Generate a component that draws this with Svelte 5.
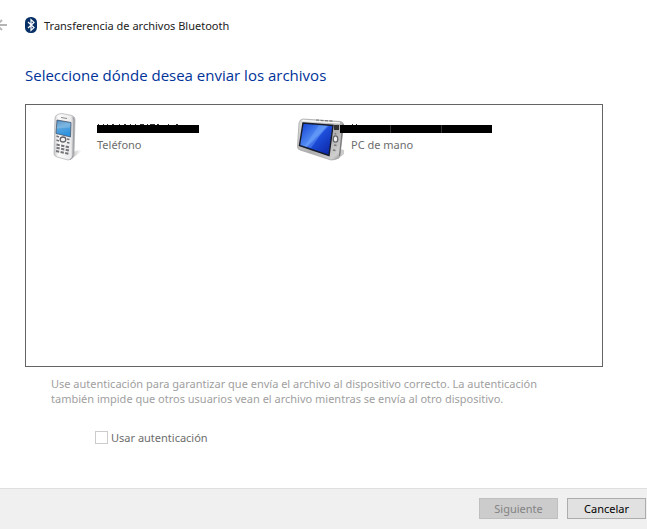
<script>
	let useAuth = $state(false);
	let selected = $state(-1);

	const devices = [
		{ kind: 'phone', type: 'Teléfono' },
		{ kind: 'handheld', type: 'PC de mano' }
	];
</script>

<div class="wizard">
	<header>
		<button class="back" aria-label="Atrás" disabled>
			<svg width="14" height="12" viewBox="0 0 14 12">
				<path d="M14 6H4M9 1L4 6l5 5" fill="none" stroke="#b4b4b4" stroke-width="1.8" />
			</svg>
		</button>
		<svg class="bt" width="12" height="16" viewBox="0 0 12 16">
			<rect width="12" height="16" rx="5.5" fill="#073067" />
			<path d="M3 5l6 5.6L6 13.3V2.7l3 2.7L3 11" fill="none" stroke="#fff" stroke-width="1.2" />
		</svg>
		<span>Transferencia de archivos Bluetooth</span>
	</header>

	<main>
		<h1>Seleccione dónde desea enviar los archivos</h1>

		<div class="devices">
			{#each devices as device, idx}
				<button class="device" class:active={idx === selected} onclick={() => (selected = idx)}>
					{#if device.kind === 'phone'}
						<svg class="pic" width="48" height="48" viewBox="0 0 48 48">
							<defs>
								<linearGradient id="body" x1="0" x2="1">
									<stop offset="0" stop-color="#c4c5c8" />
									<stop offset=".2" stop-color="#fafafa" />
									<stop offset=".8" stop-color="#ececee" />
									<stop offset="1" stop-color="#a5a6aa" />
								</linearGradient>
								<linearGradient id="lcd" x1="0" y1="0" x2=".3" y2="1">
									<stop offset="0" stop-color="#3a79b4" />
									<stop offset=".45" stop-color="#5fa6dc" />
									<stop offset="1" stop-color="#2a92e0" />
								</linearGradient>
								<linearGradient id="shade" x1="0" x2="1">
									<stop offset="0" stop-color="#777" stop-opacity=".6" />
									<stop offset="1" stop-color="#999" stop-opacity="0" />
								</linearGradient>
							</defs>
							<path d="M27 47l12-9-4-1-7 3z" fill="url(#shade)" />
							<path d="M12 5q0-3 4-4l3-.5 10 2q3 1 3 4l-1 35q0 3-3 4.500l-3 1-11-3q-3-1-3-3z" fill="url(#body)" stroke="#b6b7ba" stroke-width=".8" />
							<path d="M30 4.500l1 3-1 35q-.5 3-3 4" fill="none" stroke="#a1a2a6" stroke-width="1.2" />
							<path d="M18 4.500l6 1" stroke="#888" stroke-width="1" />
							<path d="M14 7l14 2.500-.5 14.500L13 20.500z" fill="url(#lcd)" stroke="#46566a" stroke-width=".8" />
							<path d="M14.500 8l13 2-.3 4.500-13.500 1z" fill="#fff" opacity=".18" />
							<ellipse cx="20" cy="26.5" rx="2.800" ry="2.500" fill="#f4f4f4" stroke="#65666b" stroke-width="1.3" />
							<path d="M13.500 23l2.500 1M13.500 27l2.500 1M24 26l2.500.5M24 29.500l2.500.5" stroke="#717277" stroke-width="1.500" />
							<path d="M13.500 31.500l13 2.800M13.500 34.800l13 2.800M13 38l13 2.800" stroke="#74757a" stroke-width="2" stroke-dasharray="3.300 1.400" />
						</svg>
					{:else}
						<svg class="pic" width="48" height="48" viewBox="0 0 48 48">
							<defs>
								<linearGradient id="metal" x1="0" y1="0" x2="1" y2="1">
									<stop offset="0" stop-color="#e0e0e0" />
									<stop offset=".55" stop-color="#aeaeae" />
									<stop offset=".85" stop-color="#cfcfcf" />
									<stop offset="1" stop-color="#777" />
								</linearGradient>
								<linearGradient id="screen" x1="0" y1="0" x2="1" y2="1">
									<stop offset="0" stop-color="#0d3ad2" />
									<stop offset=".45" stop-color="#5590f5" />
									<stop offset=".5" stop-color="#1d4fdc" />
									<stop offset="1" stop-color="#0a1f9c" />
								</linearGradient>
							</defs>
							<path d="M41 46l6-5v-4l-4-1z" fill="#aaa" opacity=".6" />
							<path d="M2 10q1-4 4-4l37 2.500q4 .5 3.500 4L43 42q-.5 4-5 4.500l-4 .5L3 37q-3-1-2.500-4z" fill="url(#metal)" stroke="#a0a0a0" stroke-width=".7" />
							<path d="M46 11l-3.500 32" stroke="#77787a" stroke-width="1.200" />
							<path d="M5 7.500l38 2.500" stroke="#f6f6f6" stroke-width="1.500" />
							<path d="M19 7l17 1.200" stroke="#77787a" stroke-width="1.200" stroke-dasharray="3 1.500" />
							<path d="M6 10l30 2.500-4 30L2.500 32.500z" fill="url(#screen)" stroke="#161b2b" stroke-width="1.400" />
							<path d="M22 12l8 .7L14 35l-6-2z" fill="#7db0ff" opacity=".35" />
							<rect x="37" y="12" width="5" height="5" fill="#333" />
							<ellipse cx="38.500" cy="26" rx="2.300" ry="3.200" fill="#eee" stroke="#66676b" stroke-width="1.300" />
							<path d="M38.500 20v1.500M37 32l2.500.5M36 37l2.500.5" stroke="#777" stroke-width="1.400" />
						</svg>
					{/if}
					<span class="info">
						{#if device.kind === 'phone'}
							<svg class="name" width="102" height="12" viewBox="0 0 102 12">
								<rect y="3" width="102" height="8" fill="#000" />
								<path d="M1 2.500h1M6 2.500h1M10 2.500h1M15 2.500h2M22 2.500h1M27 2.500h2M33 2.500h1M38 2.500h1M43 2.500h4M50 2.500h1M53 2.500h5M60 2.500h2M71 2.500h1M79 2.500h2" stroke="#333" />
							</svg>
						{:else}
							<svg class="name wide" width="152" height="12" viewBox="0 0 152 12">
								<rect y="3" width="152" height="8" fill="#000" />
								<path d="M12 2.500h1M16 2.500h1" stroke="#333" />
								<path d="M50.500 3v8M101.500 3v8" stroke="#333" />
							</svg>
						{/if}
						<span class="type">{device.type}</span>
					</span>
				</button>
			{/each}
		</div>

		<p>Use autenticación para garantizar que envía el archivo al dispositivo correcto. La autenticación también impide que otros usuarios vean el archivo mientras se envía al otro dispositivo.</p>

		<label>
			<input type="checkbox" bind:checked={useAuth} disabled />
			Usar autenticación
		</label>
	</main>

	<footer>
		<button class="cmd" disabled>Siguiente</button>
		<button class="cmd">Cancelar</button>
	</footer>
</div>

<style>
:global(body) {
	margin: 0;
	background: #fff;
}

.wizard {
	min-height: 100vh;
	display: flex;
	flex-direction: column;
	overflow: hidden;
	font: 11px/15px "Segoe UI", "Noto Sans", "Open Sans", sans-serif;
	color: #222;
}

button {
	font: inherit;
}

header {
	display: flex;
	align-items: center;
	height: 20px;
	padding-top: 15px;
}

.back {
	display: flex;
	margin-left: -7px;
	padding: 0;
	border: none;
	background: none;
}

.bt {
	margin: 0 7px 0 18px;
}

main {
	flex: 1;
	padding: 28px 44px 0 25px;
}

h1 {
	margin: 0 0 17px;
	font-family: "Segoe UI", "Open Sans", "Noto Sans", sans-serif;
	font-size: 15px;
	line-height: 24px;
	font-weight: 400;
	color: #003399;
}

.devices {
	display: grid;
	grid-template-columns: 254px 254px;
	align-content: start;
	box-sizing: border-box;
	height: 263px;
	padding: 8px 0 0 17px;
	border: 1px solid #646464;
}

.device {
	display: flex;
	padding: 0;
	border: none;
	background: none;
	text-align: left;
}

.device.active {
	background: #cce8ff;
}

.pic {
	flex: none;
	margin-right: 6px;
}

.info {
	display: flex;
	flex-direction: column;
	padding-top: 9px;
}

.name {
	display: block;
	margin-bottom: 3px;
}

/* the bar runs over the edge of the picture */
.name.wide {
	position: relative;
	left: -11px;
}

.type {
	color: #6d6d6d;
}

p {
	margin: 9px 0 0 26px;
	max-width: 510px;
	color: #a0a0a0;
}

label {
	display: flex;
	align-items: center;
	gap: 3px;
	margin: 24px 0 0 70px;
	color: #6d6d6d;
}

input {
	appearance: none;
	width: 13px;
	height: 13px;
	margin: 0;
	border: 1px solid #ccc;
	background: #fff;
}

input:checked {
	background: #999;
}

footer {
	display: flex;
	justify-content: flex-end;
	gap: 9px;
	padding: 9px 1px 10px;
	border-top: 1px solid #dfdfdf;
	background: #f0f0f0;
}

.cmd {
	width: 79px;
	height: 21px;
	padding: 0;
	border: 1px solid #adadad;
	background: #e1e1e1;
	color: #000;
}

.cmd:disabled {
	border-color: #bfbfbf;
	background: #ccc;
	color: #838383;
}
</style>
